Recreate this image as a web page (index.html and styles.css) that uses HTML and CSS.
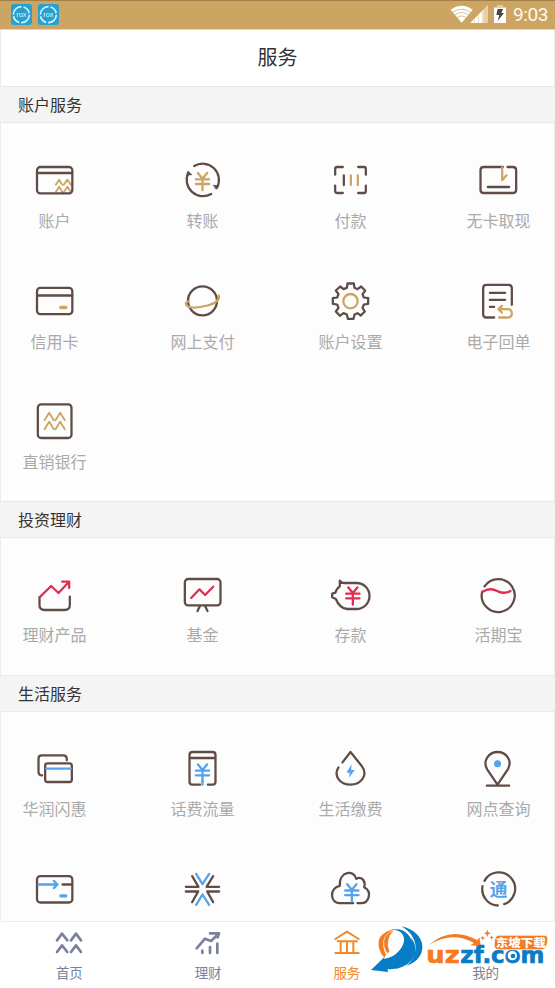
FILE: index.html
```html
<!DOCTYPE html>
<html lang="zh-CN">
<head>
<meta charset="utf-8">
<title>服务</title>
<link rel="stylesheet" href="styles.css">
</head>
<body>
<svg class="defs" width="0" height="0" aria-hidden="true">
  <symbol id="yen" viewBox="-24 -28 48 60" overflow="visible"><path d="M-14-24L0-7L14-24M-20-5H20M-20 9H20M0-7V28"/></symbol>
</svg>
<div class="screen">
  <header class="status">
    <div class="status-apps">
      <svg class="app" viewBox="0 0 63 63"><rect width="63" height="63" rx="9" fill="#25a0d0"/><circle cx="31" cy="32" r="24" fill="none" stroke="#d8f3fb" stroke-width="5" stroke-dasharray="38 6 26 5"/><text x="31" y="38" text-anchor="middle" textLength="30" lengthAdjust="spacingAndGlyphs">rox</text></svg>
      <svg class="app" viewBox="0 0 63 63"><rect width="63" height="63" rx="9" fill="#25a0d0"/><circle cx="31" cy="32" r="24" fill="none" stroke="#d8f3fb" stroke-width="5" stroke-dasharray="38 6 26 5"/><text x="31" y="38" text-anchor="middle" textLength="30" lengthAdjust="spacingAndGlyphs">rox</text></svg>
    </div>
    <svg class="signals" viewBox="525 12 174 60">
      <path d="M527 29Q560 5 593 29L560 68Z" fill="#fff"/>
      <path d="M533 37Q560 18 587 37M539 45Q560 30 581 45M546 53Q560 43 574 53" fill="none" stroke="#cca562" stroke-width="2"/>
      <path d="M639 14V69H586Z" fill="#e6d0aa"/><path d="M625 29V69H586Z" fill="#fff"/>
      <path d="M598 55V69M610 43V69M622 30V69" stroke="#dfc597" stroke-width="2"/>
      <path d="M666 16H685V21H693V30H657V21H666Z" fill="#e6d0aa"/><path d="M657 24H693V69H657Z" fill="#fff"/>
      <path d="M668 27H684L679 39H687L668 63L673 45H664Z" fill="#4a4540"/>
    </svg>
    <span class="clock">9:03</span>
  </header>
  <h1 class="title">服务</h1>

  <h2 class="section-title">账户服务</h2>
  <section class="grid grid-account">
    <div class="item"><svg class="icon gold" viewBox="98.5 24 132 132"><path class="a thin" d="M167 104L177 89L186 104M191 104L202 89L212 104M167 126L177 110L186 126M191 126L202 110L212 126"/><rect x="110.500" y="51" width="106" height="79" rx="10"/><path d="M111 69H216"/></svg><span>账户</span></div>
    <div class="item"><svg class="icon gold" viewBox="542.5 24 132 132"><path d="M582 48A49 49 0 0 1 650 114M633 132A49 49 0 0 1 564 69"/><path class="fill" d="M564 64L575 74L560 76ZM640 106L656 107L648 117Z"/><use class="a" href="#yen" x="583" y="65" width="48" height="60"/></svg><span>转账</span></div>
    <div class="item"><svg class="icon gold" viewBox="161.5 24 132 132"><path d="M180 74V57Q180 51 186 51H203M249 51H267Q272 51 272 57V74M180 107V123Q180 129 186 129H203M249 129H267Q272 129 272 123V107M206 76V105"/><path class="a" d="M227 76V105M248 76V105"/></svg><span>付款</span></div>
    <div class="item"><svg class="icon gold" viewBox="605.5 24 132 132"><path d="M683 51H626Q616 51 616 61V119Q616 129 626 129H713Q723 129 723 119V61Q723 51 713 51H697M638 111H702"/><path class="a" d="M681 52V91L694 76"/></svg><span>无卡取现</span></div>
    <div class="item"><svg class="icon gold" viewBox="98.5 25.500 132 132"><rect x="110.500" y="52" width="106" height="79" rx="10"/><path d="M111 75H216"/><path class="a wide" d="M182 111H197"/></svg><span>信用卡</span></div>
    <div class="item"><svg class="icon gold" viewBox="542.5 25.500 132 132"><circle cx="607" cy="91" r="43.500"/><path class="a" d="M565 93Q550 97 562 107Q579 116 622 105Q661 94 656 75"/></svg><span>网上支付</span></div>
    <div class="item"><svg class="icon gold" viewBox="161.5 25.500 132 132"><path d="M217 39H236L238 52L247 56L258 48L270 61L262 71L266 81L279 83V100L266 102L262 112L269 123L257 135L247 128L238 132L235 145H218L215 132L205 128L194 136L182 123L190 112L186 102L173 100V83L186 81L190 71L182 60L195 48L205 56L215 52Z"/><circle class="a" cx="226" cy="92" r="21.500"/></svg><span>账户设置</span></div>
    <div class="item"><svg class="icon gold" viewBox="605.5 25.500 132 132"><path d="M710 103V53Q710 43 700 43H634Q624 43 624 53V131Q624 141 634 141H657M644 67H690M644 88H690M644 109H657"/><path class="a" d="M672 141H698Q710 141 710 130Q710 116 698 116H671M680 106L670 116L680 126"/></svg><span>电子回单</span></div>
    <div class="item"><svg class="icon gold" viewBox="98.5 387 132 132"><rect x="113" y="403" width="101" height="101" rx="10"/><path class="a thin" d="M133 451L147 428L161 451M166 451L180 428L194 451M133 478L147 455L161 478M166 478L180 455L194 478"/></svg><span>直销银行</span></div>
  </section>

  <h2 class="section-title">投资理财</h2>
  <section class="grid grid-invest">
    <div class="item"><svg class="icon red" viewBox="98.5 36 132 132"><path d="M118 112V135Q118 150 134 150H193Q209 150 209 135V110"/><path class="a" d="M118 112L153 78L175 99L206 66M186 65H207V84"/></svg><span>理财产品</span></div>
    <div class="item"><svg class="icon red" viewBox="542.5 36 132 132"><rect x="554" y="57" width="107" height="79" rx="10"/><path d="M599 139L592 153M615 139L622 153"/><path class="a" d="M573 114L598 88L615 105L639 80"/></svg><span>基金</span></div>
    <div class="item"><svg class="icon red" viewBox="161.5 36 132 132"><path d="M206 69H244A39 39 0 0 1 244 147H216Q193 145 182 117L171 112V101L181 98Q183 87 194 79V62Q199 69 206 69Z"/><use class="a" href="#yen" x="209" y="78" width="48" height="60"/></svg><span>存款</span></div>
    <div class="item"><svg class="icon red" viewBox="605.5 36 132 132"><path d="M628 79A49.500 49.500 0 1 1 621 95"/><path class="a" d="M622 95C642 84 653 87 668 94Q689 103 706 93"/></svg><span>活期宝</span></div>
  </section>

  <h2 class="section-title">生活服务</h2>
  <section class="grid grid-life">
    <div class="item"><svg class="icon blue" viewBox="98.5 18 132 132"><path d="M126 106Q115 106 115 95V56Q115 46 125 46H189Q200 46 200 57V61"/><rect x="135" y="70" width="80" height="56" rx="7"/><path class="a" d="M138 86H212"/></svg><span>华润闪惠</span></div>
    <div class="item"><svg class="icon blue" viewBox="542.5 18 132 132"><path d="M600 134H577Q568 134 568 125V45Q568 36 577 36H637Q646 36 646 45V125Q646 134 637 134H623M568 54H646"/><use class="a" href="#yen" x="583" y="69" width="48" height="60"/><path class="a" d="M607 122V134"/></svg><span>话费流量</span></div>
    <div class="item"><svg class="icon blue" viewBox="161.5 18 132 132"><path d="M202 67L226 36L259 77C282 107 255 134 226 134C194 134 174 107 190 82"/><path class="afill" d="M229 73L214 98H224L221 113L239 90H228Z"/></svg><span>生活缴费</span></div>
    <div class="item"><svg class="icon blue" viewBox="605.5 18 132 132"><path d="M667 134L636 88C621 61 642 36 667 36C693 36 713 61 698 88ZM635 137H702"/><circle class="afill" cx="667" cy="71" r="10.500"/></svg><span>网点查询</span></div>
    <div class="item"><svg class="icon blue" viewBox="98.5 379.500 132 132"><rect x="110.500" y="407" width="106" height="79" rx="10"/><path d="M187 432H214"/><path class="a" d="M115 432H171M161 421L172 432L161 443"/><path class="a wide" d="M182 466H197"/></svg></div>
    <div class="item"><svg class="icon blue" viewBox="542.5 379.500 132 132"><path d="M557 439H595L576 407M657 439H619L639 407M557 453H594L576 485M657 453H621L639 485"/><path class="a" d="M588 400L607 431L627 400M588 493L607 462L627 493"/></svg></div>
    <div class="item"><svg class="icon blue" viewBox="161.5 379.500 132 132"><path d="M234 488H193C163 488 163 440 194 436C191 390 239 388 243 415C263 405 272 426 267 440C291 452 283 488 257 488H247"/><use class="a" href="#yen" x="206" y="427" width="48" height="60"/></svg></div>
    <div class="item"><svg class="icon blue" viewBox="605.5 379.500 132 132"><path d="M628 421A49 49 0 1 1 687 491M668 495A49 49 0 0 1 622 437"/><text class="tong" x="670" y="467" text-anchor="middle">通</text></svg></div>
  </section>

  <nav class="tabs">
    <div class="tab"><svg class="tab-icon" viewBox="162 60 90 84"><path d="M171 94L186 74L202 94M213 94L228 74L243 94M171 129L186 109L202 129M213 129L228 109L243 129"/></svg><span>首页</span></div>
    <div class="tab"><svg class="tab-icon" viewBox="577 60 90 84"><path d="M588 118L613 89L631 96L653 75M628 73H655L651 85M605 125V132M628 114V132M650 104V132"/></svg><span>理财</span></div>
    <div class="tab active"><svg class="tab-icon" viewBox="49 60 90 84"><path d="M59 90L94 68L129 90M66 97H124M75 97V131M94 97V131M113 97V131M59 132H129"/></svg><span>服务</span></div>
    <div class="tab"><svg class="tab-icon" viewBox="0 0 90 84"></svg><span>我的</span></div>
  </nav>

  <svg class="watermark" viewBox="0 0 720 234">
    <path d="M239 57Q181 70 192 114Q196 131 208 143L213 134Q190 94 239 57Z" fill="#f47b20"/>
    <path d="M238 59Q199 74 207 110Q210 124 218 131L224 124Q210 89 238 59Z" fill="#f47b20" stroke="#fff" stroke-width="2"/>
    <path d="M226 61C262 54 280 86 257 116C242 137 222 145 206 146L208 141L168 180L219 186L218 177C258 182 293 153 293 112C293 75 263 49 226 61Z" fill="#087cc5"/>
    <path d="M259 49C337 65 344 146 274 168C313 139 314 79 259 49Z" fill="#087cc5"/>
    <path d="M288 84Q296 142 240 177Q285 170 300 133Q306 104 288 84Z" fill="#087cc5"/>
    <path d="M340 106Q407 46 487 91L493 82L498 109L466 106L477 99Q411 61 340 106Z" fill="#f47b20"/>
    <path d="M517 59L520 67L528 70L520 73L517 81L514 73L506 70L514 67ZM503 77L505 82L510 84L505 86L503 91L501 86L496 84L501 82ZM530 76L532 81L537 83L532 85L530 90L528 85L523 83L528 81Z" fill="#f47b20"/>
    <g class="wm-brand"><text x="334" y="158" textLength="100" lengthAdjust="spacingAndGlyphs" fill="#f47b20" stroke="#f47b20">uz</text><text x="436" y="158" textLength="252" lengthAdjust="spacingAndGlyphs" fill="#087cc5" stroke="#087cc5">zf.com</text></g>
    <circle cx="592" cy="137" r="14" fill="#fff"/><circle cx="594" cy="138" r="7" fill="#087cc5"/>
    <path d="M549 76H687Q700 76 698 91Q695 117 683 119H551Q536 118 538 101Q539 78 549 76Z" fill="#f47b20" stroke="#fff" stroke-width="2"/>
    <text class="wm-tag" x="542" y="111" textLength="150" lengthAdjust="spacingAndGlyphs">东坡下载</text>
  </svg>
</div>
</body>
</html>
```
FILE: styles.css
```css
* { box-sizing: border-box; }
body {
  margin: 0;
  font-family: "Noto Sans CJK SC", sans-serif;
  background: #fff;
}
.defs { position: absolute; }
.screen {
  position: relative;
  display: flex;
  flex-direction: column;
  width: 555px;
  height: 988px;
  overflow: hidden;
}
.status {
  display: flex;
  align-items: center;
  flex: none;
  height: 30px;
  padding: 0 7px 0 11px;
  background: #cca562;
  border-top: 1px solid #a27f46;
  border-bottom: 1px solid #e6d3b2;
}
.status-apps { display: flex; gap: 6px; margin: -1px auto 0 0; }
.app { display: block; width: 21px; height: 21px; }
.app text { font: 19px "Liberation Sans", sans-serif; fill: #e3f6fc; }
.signals { width: 58px; height: 20px; margin-top: -2px; }
.clock {
  width: 35px;
  margin-left: 5px;
  font: 19px/28px Roboto, sans-serif;
  letter-spacing: -0.4px;
  color: #fff8ec;
  white-space: nowrap;
}
.title {
  flex: none;
  height: 56px;
  margin: 0;
  border: solid #ececec;
  border-width: 0 1px;
  font-size: 20px;
  font-weight: 400;
  line-height: 54px;
  text-align: center;
  color: #333;
}
.section-title {
  flex: none;
  height: 37px;
  margin: 0;
  padding-left: 18px;
  background: #f4f4f4;
  border: solid #e9e9e9;
  border-width: 1px 0;
  font-size: 16px;
  font-weight: 400;
  line-height: 34px;
  color: #333;
}
.grid {
  display: grid;
  flex: none;
  grid-template-columns: repeat(4, 107px);
  grid-auto-rows: 120.5px;
  column-gap: 41px;
  padding-top: 35px;
  background: #fdfdfd;
  border: solid #ececec;
  border-width: 0 1px;
  overflow: hidden;
}
.grid-account { height: 378px; }
.grid-invest { height: 137px; padding-top: 34px; }
.grid-life { height: 209px; padding-top: 34px; }
.item {
  display: flex;
  flex-direction: column;
  align-items: center;
  gap: 7px;
  font-size: 16px;
  line-height: 22px;
  color: #aaa;
  white-space: nowrap;
}
.icon {
  display: block;
  flex: none;
  width: 44px;
  height: 44px;
  fill: none;
  stroke: #5f4c46;
  stroke-width: 6.8;
  stroke-linecap: round;
  stroke-linejoin: round;
}
.gold { --accent: #cca562; }
.red { --accent: #e42c50; }
.blue { --accent: #56a3ec; }
.icon .a { stroke: var(--accent); }
.icon .thin { stroke-width: 5.5; }
.icon .wide { stroke-width: 10; }
.icon .fill { fill: #5f4c46; stroke-width: 2; }
.icon .afill { fill: var(--accent); stroke: none; }
.icon .tong {
  font-size: 53px;
  font-weight: 700;
  fill: var(--accent);
  stroke: none;
}
.tabs {
  display: flex;
  flex: none;
  height: 67px;
  padding-top: 7px;
  border-top: 1px solid #ededed;
  background: #fff;
}
.tab {
  display: flex;
  flex: 1;
  flex-direction: column;
  align-items: center;
  font-size: 13.5px;
  line-height: 20px;
  color: #79829b;
}
.tab-icon {
  width: 30px;
  height: 28px;
  margin-bottom: 5px;
  fill: none;
  stroke: currentColor;
  stroke-width: 8;
  stroke-linecap: round;
  stroke-linejoin: round;
}
.active { color: #f08a24; }
.active .tab-icon { stroke-width: 6; }
.watermark {
  position: absolute;
  left: 315px;
  top: 910px;
  width: 240px;
  height: 78px;
}
.wm-brand { font: 700 70px "DejaVu Sans", sans-serif; stroke-width: 2; }
.wm-tag { font-size: 34px; font-weight: 900; fill: #fff; }
```
